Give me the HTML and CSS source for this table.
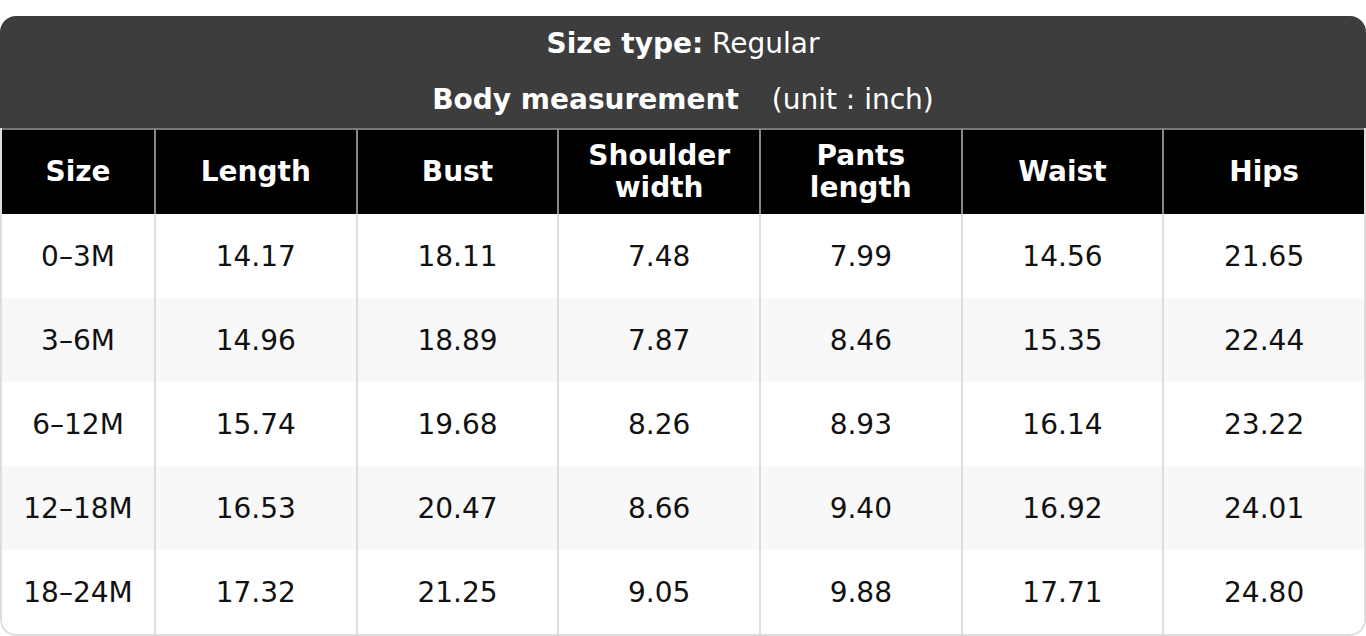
FILE: index.html
```html
<!DOCTYPE html>
<html lang="en">
<head>
<meta charset="utf-8">
<title>Size chart</title>
<link rel="stylesheet" href="styles.css">
</head>
<body>
<div class="card">
  <div class="caption">
    <div class="caption-line"><b>Size type:</b> Regular</div>
    <div class="caption-line"><b>Body measurement</b> <span class="unit">(unit : inch)</span></div>
  </div>
  <div class="chart-wrap">
    <table class="chart">
      <colgroup>
        <col class="col-size">
        <col><col><col><col><col><col>
      </colgroup>
      <thead>
        <tr>
          <th>Size</th><th>Length</th><th>Bust</th><th>Shoulder<br>width</th><th>Pants<br>length</th><th>Waist</th><th>Hips</th>
        </tr>
      </thead>
      <tbody>
        <tr><td>0–3M</td><td>14.17</td><td>18.11</td><td>7.48</td><td>7.99</td><td>14.56</td><td>21.65</td></tr>
        <tr><td>3–6M</td><td>14.96</td><td>18.89</td><td>7.87</td><td>8.46</td><td>15.35</td><td>22.44</td></tr>
        <tr><td>6–12M</td><td>15.74</td><td>19.68</td><td>8.26</td><td>8.93</td><td>16.14</td><td>23.22</td></tr>
        <tr><td>12–18M</td><td>16.53</td><td>20.47</td><td>8.66</td><td>9.40</td><td>16.92</td><td>24.01</td></tr>
        <tr><td>18–24M</td><td>17.32</td><td>21.25</td><td>9.05</td><td>9.88</td><td>17.71</td><td>24.80</td></tr>
      </tbody>
    </table>
  </div>
</div>
</body>
</html>
```

FILE: styles.css
```css
html, body {
  margin: 0;
  padding: 0;
  background: #ffffff;
}
body {
  padding-top: 16px;
  font-family: "DejaVu Sans", "Liberation Sans", sans-serif;
  font-size: 28px;
  color: #111111;
}
.card {
  border-radius: 16px;
  overflow: hidden;
  width: 1366px;
}
.caption {
  background: #3d3d3d;
  color: #ffffff;
  text-align: center;
}
.caption-line {
  height: 56px;
  line-height: 56px;
}
.caption b {
  font-weight: bold;
}
.unit {
  margin-left: 24px;
}
.chart-wrap {
  border: 2px solid #dddddd;
  border-top: none;
  border-radius: 0 0 16px 16px;
  overflow: hidden;
}
.chart {
  width: 100%;
  border-collapse: separate;
  border-spacing: 0;
  table-layout: fixed;
}
.col-size {
  width: 152px;
}
.chart th {
  background: #000000;
  color: #ffffff;
  font-weight: bold;
  height: 86px;
  line-height: 32px;
  padding: 0;
  border-top: 2px solid #777777;
  border-left: 2px solid #888888;
  box-sizing: border-box;
  text-align: center;
  vertical-align: middle;
}
.chart td {
  height: 84px;
  padding: 0;
  border-left: 2px solid #dddddd;
  box-sizing: border-box;
  text-align: center;
  vertical-align: middle;
}
.chart th:first-child,
.chart td:first-child {
  border-left: none;
}
.chart tbody tr:nth-child(even) td {
  background: #f8f8f8;
}
```
